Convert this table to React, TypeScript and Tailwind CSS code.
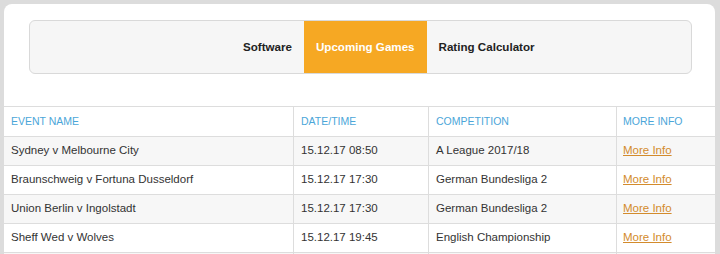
import React from 'react';

const games = [
  { event: 'Sydney v Melbourne City', date: '15.12.17 08:50', comp: 'A League 2017/18' },
  { event: 'Braunschweig v Fortuna Dusseldorf', date: '15.12.17 17:30', comp: 'German Bundesliga 2' },
  { event: 'Union Berlin v Ingolstadt', date: '15.12.17 17:30', comp: 'German Bundesliga 2' },
  { event: 'Sheff Wed v Wolves', date: '15.12.17 19:45', comp: 'English Championship' },
];

const cols = 'grid grid-cols-[290px_135px_188px_98px]';

export default function App() {
  return (
    <div className="w-[720px] h-[254px] overflow-hidden bg-[#dcdcdc] pt-[4px] pl-[4px] pr-[5px] font-['Liberation_Sans',Arial,sans-serif]">
      <div className="bg-white rounded-t-[8px] h-full pt-[16px]">
        {/* nav */}
        <div className="ml-[25px] mr-[23px] h-[54px] bg-[#f6f6f6] border border-[#d9d9d9] rounded-[6px] flex items-stretch pl-[201px] text-[11.6px] font-bold text-[#222]">
          <a className="flex items-center px-[12px]">Software</a>
          <a className="flex items-center px-[12px] bg-[#f6a823] text-white">Upcoming Games</a>
          <a className="flex items-center px-[12px]">Rating Calculator</a>
        </div>

        {/* table */}
        <div className="mt-[32px] border-t border-[#dddddd] text-[11.5px]">
          <div className={`${cols} h-[29px] text-[#4ba6d9] text-[10.5px] uppercase`}>
            <div className="flex items-center px-[7px] border-r border-[#dddddd]">Event Name</div>
            <div className="flex items-center px-[7px] border-r border-[#dddddd]">Date/Time</div>
            <div className="flex items-center px-[7px] border-r border-[#dddddd]">Competition</div>
            <div className="flex items-center px-[6px]">More Info</div>
          </div>
          {games.map((g, i) => (
            <div
              key={i}
              className={`${cols} h-[29px] border-t border-[#dddddd] text-[#333] ${i % 2 === 0 ? 'bg-[#f7f7f7]' : 'bg-white'}`}
            >
              <div className="flex items-center px-[7px] border-r border-[#dddddd]">{g.event}</div>
              <div className="flex items-center px-[7px] border-r border-[#dddddd]">{g.date}</div>
              <div className="flex items-center px-[7px] border-r border-[#dddddd]">{g.comp}</div>
              <div className="flex items-center px-[6px]">
                <a href="#" className="text-[#d38b2c] underline">More Info</a>
              </div>
            </div>
          ))}
          {/* next row, cut off by the window */}
          <div className={`${cols} h-[29px] border-t border-[#dddddd] bg-[#f7f7f7]`}>
            <div className="border-r border-[#dddddd]" />
            <div className="border-r border-[#dddddd]" />
            <div className="border-r border-[#dddddd]" />
            <div />
          </div>
        </div>
      </div>
    </div>
  );
}
